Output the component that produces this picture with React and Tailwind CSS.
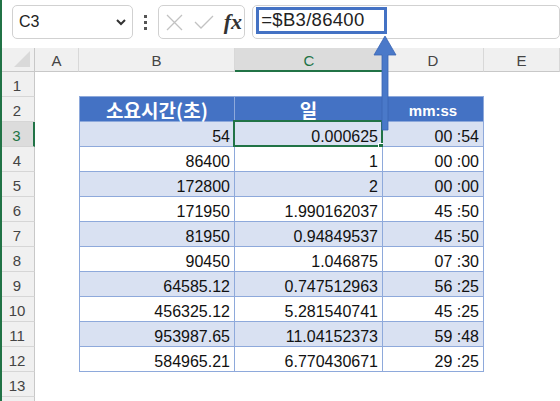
import React from "react";

const FONT = { fontFamily: '"Liberation Sans", Arial, sans-serif' };
const KFONT = { fontFamily: '"Noto Sans CJK KR", "Noto Sans", sans-serif' };

const rows = [
  ["54", "0.000625", "00 :54"],
  ["86400", "1", "00 :00"],
  ["172800", "2", "00 :00"],
  ["171950", "1.990162037", "45 :50"],
  ["81950", "0.94849537", "45 :50"],
  ["90450", "1.046875", "07 :30"],
  ["64585.12", "0.747512963", "56 :25"],
  ["456325.12", "5.281540741", "45 :25"],
  ["953987.65", "11.04152373", "59 :48"],
  ["584965.21", "6.770430671", "29 :25"],
];

function RowHead({ n, selected }) {
  return (
    <div
      className={
        "h-[25px] flex items-end justify-center pb-[3px] text-[15px] leading-none border-b " +
        (selected
          ? "bg-[#dcdcdc] text-[#217346] border-b-[#d4d4d4] border-r-2 border-r-[#217346]"
          : "bg-[#f0f0f0] text-[#444] border-b-[#d6d6d6] border-r border-r-[#c8c8c8]")
      }
    >
      {n}
    </div>
  );
}

function EmptyRow({ n }) {
  return (
    <>
      <RowHead n={n} />
      <div className="h-[25px] bg-white" />
      <div className="h-[25px] bg-white" />
      <div className="h-[25px] bg-white" />
      <div className="h-[25px] bg-white" />
      <div className="h-[25px] bg-white" />
    </>
  );
}

function DataCell({ children, band, first, selected }) {
  return (
    <div
      className={
        "relative h-[25px] flex items-end justify-end pr-[4px] pb-[1.5px] text-[16px] leading-none text-[#111] border-b border-r border-[#8ea9db] " +
        (first ? "border-l " : "") +
        (band ? "bg-[#d9e1f2]" : "bg-white")
      }
    >
      {children}
      {selected && (
        <>
          <div className="absolute -left-[2px] -top-[2px] -right-[1px] -bottom-[1px] border-2 border-[#217346]" />
          <div className="absolute -right-[2px] -bottom-[2px] w-[6px] h-[5px] bg-[#217346] border-l border-t border-white" />
        </>
      )}
    </div>
  );
}

export default function App() {
  return (
    <div className="relative w-[560px] h-[401px] overflow-hidden bg-white border-l-2 border-[#217346]" style={FONT}>
      {/* formula bar */}
      <div className="h-[48px] flex items-start pt-[5px] bg-white -ml-[2px]">
        <div className="ml-[12px] w-[125px] h-[34px] border border-[#d1d1d1] rounded-[5px] flex items-center pl-[6px] pr-[6px] bg-white">
          <span className="text-[16px] text-[#222] leading-none">C3</span>
          <svg className="ml-auto" width="10" height="8" viewBox="0 0 10 8">
            <path d="M1 2 L5 6 L9 2" fill="none" stroke="#333" strokeWidth="2" />
          </svg>
        </div>
        <div className="w-[26px] h-[34px] flex flex-col items-center justify-center gap-[3px]">
          <div className="w-[3px] h-[3px] bg-[#555]" />
          <div className="w-[3px] h-[3px] bg-[#555]" />
          <div className="w-[3px] h-[3px] bg-[#555]" />
        </div>
        <div className="w-[91px] h-[34px] border border-[#d1d1d1] rounded-[5px] flex items-center bg-white">
          <svg className="ml-[7px]" width="17" height="17" viewBox="0 0 17 17">
            <path d="M1 1 L16 16 M16 1 L1 16" stroke="#c2c2c2" strokeWidth="1.3" fill="none" />
          </svg>
          <svg className="ml-[11px]" width="20" height="16" viewBox="0 0 20 16">
            <path d="M1 8 L7 14 L19 2" stroke="#c2c2c2" strokeWidth="1.3" fill="none" />
          </svg>
          <span
            className="ml-[10px] text-[22px] italic font-semibold leading-none text-[#333]"
            style={{ fontFamily: '"Liberation Serif", "Times New Roman", serif' }}
          >
            fx
          </span>
        </div>
        <div className="ml-[7px] w-[320px] h-[34px] border border-[#d1d1d1] rounded-[5px] bg-white pl-[3px] pt-[1px]">
          <div className="w-[131px] h-[27px] border-[3px] border-[#4472c4] flex items-center pl-[2px]">
            <span className="text-[18.5px] leading-none text-[#222] tracking-[0.3px]">=$B3/86400</span>
          </div>
        </div>
      </div>

      {/* sheet */}
      <div className="-ml-[2px] grid grid-cols-[35px_44px_156px_148px_101px_76px]">
        {/* column header */}
        <div className="h-[24px] bg-[#f0f0f0] border-b border-r border-[#c8c8c8] relative">
          <svg className="absolute right-[4px] bottom-[4px]" width="16" height="16" viewBox="0 0 16 16">
            <polygon points="16,0 16,16 0,16" fill="#d9d9d9" />
          </svg>
        </div>
        {["A", "B", "C", "D", "E"].map((c) =>
          c === "C" ? (
            <div
              key={c}
              className="h-[24px] bg-[#dcdcdc] text-[#217346] border-b-2 border-[#217346] flex items-end justify-center pb-[2px] text-[15px] leading-none"
            >
              {c}
            </div>
          ) : (
            <div
              key={c}
              className="h-[24px] bg-[#f0f0f0] text-[#444] border-b border-b-[#c8c8c8] border-r border-r-[#d8d8d8] flex items-end justify-center pb-[3px] text-[15px] leading-none"
            >
              {c}
            </div>
          )
        )}

        {/* row 1 */}
        <RowHead n={1} />
        <div className="h-[25px] bg-white" />
        <div className="h-[25px] bg-white border-b border-[#8ea9db]" />
        <div className="h-[25px] bg-white border-b border-[#8ea9db]" />
        <div className="h-[25px] bg-white border-b border-[#8ea9db]" />
        <div className="h-[25px] bg-white" />

        {/* row 2 header */}
        <RowHead n={2} />
        <div className="h-[25px] bg-white" />
        <div
          className="h-[25px] bg-[#4472c4] border-l border-r border-b border-[#8ea9db] flex items-end justify-center pb-[2px] text-[19px] leading-none font-bold text-white"
          style={KFONT}
        >
          소요시간(초)
        </div>
        <div
          className="h-[25px] bg-[#4472c4] border-r border-b border-[#8ea9db] flex items-end justify-center pb-[2px] text-[19px] leading-none font-bold text-white"
          style={KFONT}
        >
          일
        </div>
        <div className="h-[25px] bg-[#4472c4] border-r border-b border-[#8ea9db] flex items-end justify-center pb-[3px] text-[15px] leading-none font-bold text-white">
          mm:ss
        </div>
        <div className="h-[25px] bg-white" />

        {rows.map((r, i) => {
          const band = i % 2 === 0;
          return (
            <React.Fragment key={i}>
              <RowHead n={i + 3} selected={i === 0} />
              <div className="h-[25px] bg-white" />
              <DataCell band={band} first>
                {r[0]}
              </DataCell>
              <DataCell band={band} selected={i === 0}>
                {r[1]}
              </DataCell>
              <DataCell band={band}>{r[2]}</DataCell>
              <div className="h-[25px] bg-white" />
            </React.Fragment>
          );
        })}

        <EmptyRow n={13} />
        <EmptyRow n="" />
      </div>

      {/* arrow overlay */}
      <svg className="absolute left-[371px] top-[36px]" width="24" height="96" viewBox="0 0 24 96">
        <polygon
          points="12,0 23,19 15,19 15,94 9,94 9,19 1,19"
          fill="#4a79c9"
          stroke="#3b66b4"
          strokeWidth="0.8"
        />
      </svg>
    </div>
  );
}
